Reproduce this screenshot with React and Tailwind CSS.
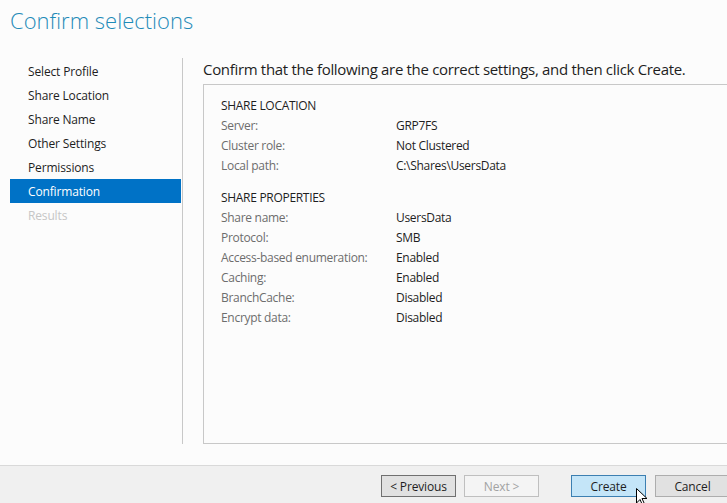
const navItems = [
  { label: "Select Profile" },
  { label: "Share Location" },
  { label: "Share Name" },
  { label: "Other Settings" },
  { label: "Permissions" },
  { label: "Confirmation", active: true },
  { label: "Results", disabled: true },
];

const sections = [
  {
    title: "SHARE LOCATION",
    rows: [
      ["Server:", "GRP7FS"],
      ["Cluster role:", "Not Clustered"],
      ["Local path:", "C:\\Shares\\UsersData"],
    ],
  },
  {
    title: "SHARE PROPERTIES",
    rows: [
      ["Share name:", "UsersData"],
      ["Protocol:", "SMB"],
      ["Access-based enumeration:", "Enabled"],
      ["Caching:", "Enabled"],
      ["BranchCache:", "Disabled"],
      ["Encrypt data:", "Disabled"],
    ],
  },
];

function Cursor() {
  return (
    <svg
      className="absolute left-[635px] top-[487px]"
      width="14"
      height="20"
      viewBox="0 0 14 20"
    >
      <path
        d="M1.5 1.5 L1.5 16 L5 12.5 L7.5 18 L9.5 17 L7 11.5 L12 11.5 Z"
        fill="#fff"
        stroke="#000"
        strokeWidth="1"
        strokeLinejoin="miter"
      />
    </svg>
  );
}

export default function App() {
  return (
    <div
      className="relative w-[727px] h-[503px] overflow-hidden bg-[#fcfcfc] text-[#1e1e1e]"
      style={{ fontFamily: '"Open Sans", "Noto Sans", sans-serif' }}
    >
      {/* Title */}
      <div className="h-[58px] pl-[10px] pt-[3px]">
        <h1 className="text-[22px] font-light leading-[34px] text-[#1f8bb8]">
          Confirm selections
        </h1>
      </div>

      {/* Body */}
      <div className="flex h-[386px]">
        <div className="w-[183px] shrink-0 pl-[10px] border-r border-[#c8c8c8]">
          <ul className="w-[171px] pt-px text-[12px] tracking-[-0.15px]">
            {navItems.map((item) => (
              <li
                key={item.label}
                className={`h-[24px] leading-[25px] pl-[18px] ${
                  item.active
                    ? "bg-[#0072c6] text-white"
                    : item.disabled
                    ? "text-[#c6c6c6]"
                    : "text-[#1e1e1e]"
                }`}
              >
                {item.label}
              </li>
            ))}
          </ul>
        </div>

        <div className="flex-1 pl-[20px] flex flex-col min-w-0">
          <p className="h-[26px] leading-[22px] text-[15px] tracking-[-0.32px] whitespace-nowrap text-[#1e1e1e]">
            Confirm that the following are the correct settings, and then click Create.
          </p>
          <div className="w-[560px] flex-1 border border-[#c8c8c8] pl-[17px] pt-[11px] text-[12px] tracking-[-0.3px]">
            {sections.map((section, i) => (
              <div key={section.title} className={i > 0 ? "mt-[12px]" : ""}>
                <div className="h-[20px] leading-[20px] text-[#1e1e1e]">
                  {section.title}
                </div>
                {section.rows.map(([label, value]) => (
                  <div key={label} className="flex h-[20px] leading-[20px]">
                    <span className="w-[175px] shrink-0 text-[#6d6d6d]">{label}</span>
                    <span className="text-[#1e1e1e]">{value}</span>
                  </div>
                ))}
              </div>
            ))}
          </div>
        </div>
      </div>

      {/* Footer */}
      <div className="mt-[21px] h-[38px] border-t border-[#d9d9d9] bg-[#f0f0f0] pt-[9px] pl-[381px] flex text-[12px] tracking-[-0.15px]">
        <button className="shrink-0 w-[75px] h-[22px] pt-[2px] border border-[#707070] bg-[#e1e1e1] text-[#1e1e1e]">
          &lt; Previous
        </button>
        <button className="shrink-0 ml-[8px] w-[75px] h-[22px] pt-[2px] border border-[#bfbfbf] bg-[#f4f4f4] text-[#a2a2a2]">
          Next &gt;
        </button>
        <button className="shrink-0 ml-[32px] w-[75px] h-[22px] pt-[2px] border border-[#3c7fb1] bg-[#c4e5f8] text-[#1e1e1e]">
          Create
        </button>
        <button className="shrink-0 ml-[9px] w-[75px] h-[22px] pt-[2px] border border-[#adadad] bg-[#e1e1e1] text-[#1e1e1e]">
          Cancel
        </button>
      </div>

      <Cursor />
    </div>
  );
}
